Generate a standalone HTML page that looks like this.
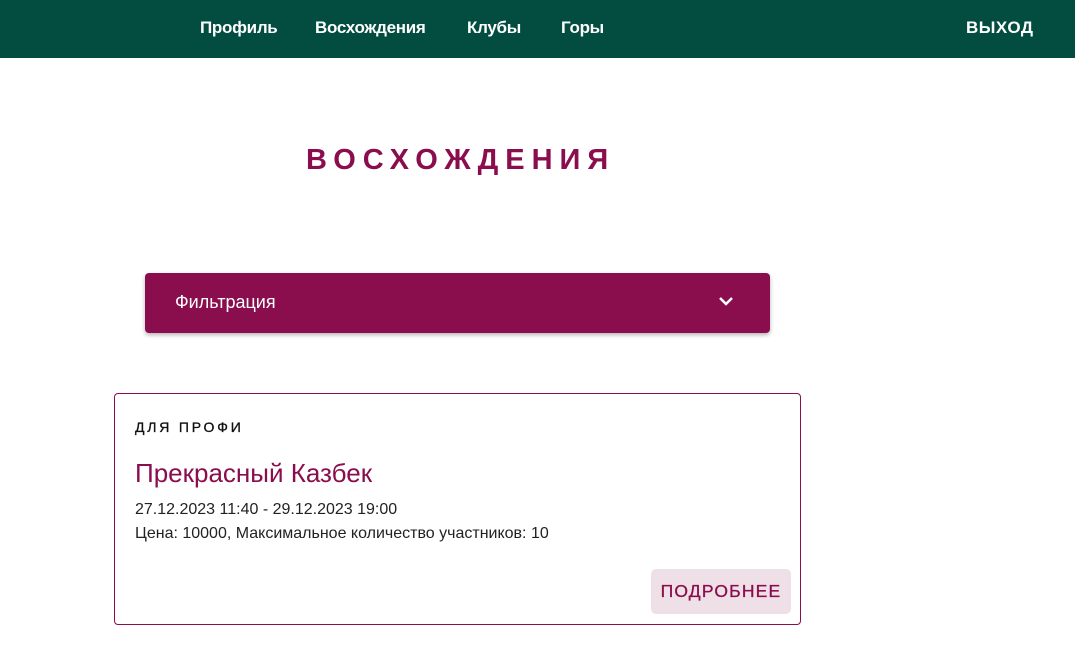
<!DOCTYPE html>
<html><head><meta charset="utf-8"><style>
*{margin:0;padding:0;box-sizing:border-box}
body{width:1075px;height:665px;background:#fff;font-family:"Liberation Sans",sans-serif;position:relative;overflow:hidden}
.nav{position:absolute;left:0;top:0;width:1075px;height:58px;background:#024d40;color:#fff;font-weight:bold;font-size:17px}
.nav span{position:absolute;top:18px;letter-spacing:-0.3px}
h1{position:absolute;left:306px;top:144px;font-size:29px;color:#8a0d4e;letter-spacing:7px;font-weight:bold}
.filt{position:absolute;left:145px;top:273px;width:625px;height:60px;background:#8a0d4e;border-radius:4px;box-shadow:0 2px 4px rgba(0,0,0,.3);color:#fff;font-size:18px}
.filt span{position:absolute;left:30px;top:19px}
.filt svg{position:absolute;left:573px;top:22px}
.card{position:absolute;left:114px;top:393px;width:687px;height:232px;border:1px solid #8a0d4e;border-radius:4px}
.t1{position:absolute;left:20px;top:25px;font-size:14px;letter-spacing:2.8px;color:#111;-webkit-text-stroke:0.3px #111}
.t2{position:absolute;left:20px;top:64px;font-size:26px;color:#8a0d4e}
.t3{position:absolute;left:20px;top:107px;font-size:16px;color:#222}
.t4{position:absolute;left:20px;top:131px;font-size:16px;color:#222}
.btn{position:absolute;left:536px;top:175px;width:140px;height:45px;background:#efe0e7;border-radius:5px;color:#8a0d4e;font-size:17.5px;letter-spacing:1.2px;text-align:center;line-height:45px;-webkit-text-stroke:0.3px #8a0d4e}
</style></head><body>
<div class="nav"><span style="left:200px">Профиль</span><span style="left:315px">Восхождения</span><span style="left:467px">Клубы</span><span style="left:561px">Горы</span><span style="left:966px;letter-spacing:0.5px">ВЫХОД</span></div>
<h1>ВОСХОЖДЕНИЯ</h1>
<div class="filt"><span>Фильтрация</span><svg width="16" height="12" viewBox="0 0 16 12"><path d="M2 3l6 6 6-6" stroke="#fff" stroke-width="2.5" fill="none"/></svg></div>
<div class="card">
<div class="t1">ДЛЯ ПРОФИ</div>
<div class="t2">Прекрасный Казбек</div>
<div class="t3">27.12.2023 11:40 - 29.12.2023 19:00</div>
<div class="t4">Цена: 10000, Максимальное количество участников: 10</div>
<div class="btn">ПОДРОБНЕЕ</div>
</div>
</body></html>
